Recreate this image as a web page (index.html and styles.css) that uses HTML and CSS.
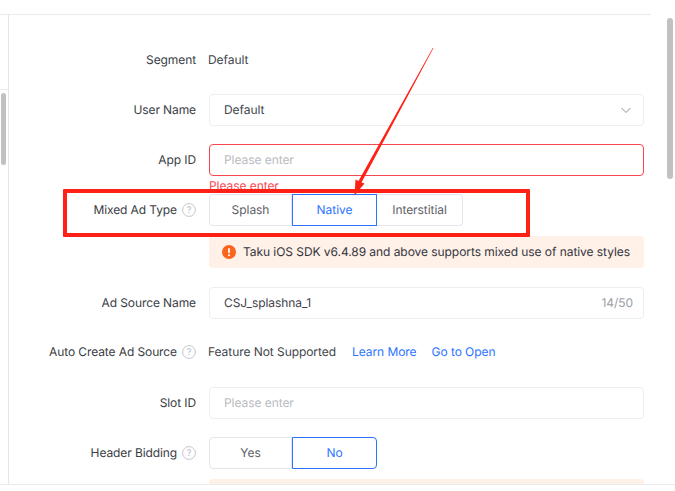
FILE: index.html
```html
<!DOCTYPE html>
<html lang="en">
<head>
<meta charset="utf-8">
<title>Ad Source</title>
<link rel="stylesheet" href="styles.css">
</head>
<body>
<div class="page">
  <div class="topbar"></div>
  <div class="main">
    <aside class="rail"><div class="rail-top"></div><div class="rail-thumb"></div></aside>
    <form class="form">
      <div class="row">
        <div class="label">Segment</div>
        <div class="control"><div class="plain">Default</div></div>
      </div>
      <div class="row">
        <div class="label">User Name</div>
        <div class="control">
          <div class="input select"><span>Default</span>
            <svg class="chev" width="12" height="12" viewBox="0 0 12 12"><path d="M1.500 4 6 8.500 10.500 4" fill="none" stroke="#b9bcc4" stroke-width="1.100"/></svg>
          </div>
        </div>
      </div>
      <div class="row tight">
        <div class="label">App ID</div>
        <div class="control">
          <div class="input invalid"><span class="ph">Please enter</span></div>
          <div class="error">Please enter</div>
        </div>
      </div>
      <div class="row wide">
        <div class="label">Mixed Ad Type<svg class="help" width="14" height="14" viewBox="0 0 14 14"><circle cx="7" cy="7" r="6.400" fill="none" stroke="#c4c6cc"/><text x="7" y="10.200" text-anchor="middle" class="help-q">?</text></svg></div>
        <div class="control">
          <div class="segs">
            <div class="seg first">Splash</div>
            <div class="seg on">Native</div>
            <div class="seg last">Interstitial</div>
          </div>
          <div class="alert">
            <svg class="alert-icon" width="14" height="14" viewBox="0 0 14 14"><circle cx="7" cy="7" r="7" fill="#f9651c"/><rect x="6.100" y="3" width="1.800" height="5.200" rx=".9" fill="#fff"/><circle cx="7" cy="10.200" r="1.050" fill="#fff"/></svg>
            <span>Taku iOS SDK v6.4.89 and above supports mixed use of native styles</span>
          </div>
        </div>
      </div>
      <div class="row close">
        <div class="label">Ad Source Name</div>
        <div class="control"><div class="input select"><span>CSJ_splashna_1</span><span class="count">14/50</span></div></div>
      </div>
      <div class="row wide">
        <div class="label">Auto Create Ad Source<svg class="help" width="14" height="14" viewBox="0 0 14 14"><circle cx="7" cy="7" r="6.400" fill="none" stroke="#c4c6cc"/><text x="7" y="10.200" text-anchor="middle" class="help-q">?</text></svg></div>
        <div class="control"><div class="plain links"><span>Feature Not Supported</span><a>Learn More</a><a>Go to Open</a></div></div>
      </div>
      <div class="row">
        <div class="label">Slot ID</div>
        <div class="control"><div class="input"><span class="ph">Please enter</span></div></div>
      </div>
      <div class="row">
        <div class="label">Header Bidding<svg class="help" width="14" height="14" viewBox="0 0 14 14"><circle cx="7" cy="7" r="6.400" fill="none" stroke="#c4c6cc"/><text x="7" y="10.200" text-anchor="middle" class="help-q">?</text></svg></div>
        <div class="control">
          <div class="segs">
            <div class="seg first">Yes</div>
            <div class="seg on on-end">No</div>
          </div>
          <div class="alert alert-cut"></div>
        </div>
      </div>
    </form>
  </div>
  <div class="page-thumb"></div>
</div>
<div class="mark-box"></div>
<svg class="mark-arrow" width="100" height="160" viewBox="0 0 100 160"><polygon points="88.500,3 87.800,3 13.500,136 10.500,134.500 9.500,150.500 19.500,138.500 16.500,137.500" fill="#ff2116"/></svg>
</body>
</html>
```
FILE: styles.css
```css
* { box-sizing: border-box; }
html, body { margin: 0; height: 100%; background: #fff; overflow: hidden; }
body { font-family: Inter, "Liberation Sans", sans-serif; font-size: 12px; color: #33363d; position: relative; text-rendering: geometricPrecision; letter-spacing: -0.06px; }
.page { height: 485px; display: flex; flex-direction: column; border-bottom: 1px solid #e8eaf0; position: relative; }
.topbar { height: 15px; width: 651px; border-bottom: 1px solid #e8eaf0; flex: none; }
.main { flex: 1; min-height: 0; display: flex; overflow: hidden; }
.rail { width: 9px; flex: none; border-right: 1px solid #e4e6ee; position: relative; }
.rail-top { position: absolute; left: 0; right: 0; top: 74px; border-top: 1px solid #eceef3; }
.rail-thumb { position: absolute; left: 1px; top: 78px; width: 5px; height: 72px; background: #c1c1c1; border-radius: 3px; }
.page-thumb { position: absolute; left: 667px; top: 18px; width: 6px; height: 161px; background: #c1c1c1; border-radius: 3px; }
.form { width: 635px; padding-top: 29px; flex: none; }
.row { display: grid; grid-template-columns: 187px 435px; column-gap: 13px; margin-bottom: 18px; }
.row.tight { margin-bottom: 0; }
.row.wide { margin-bottom: 19px; }
.row.close { margin-bottom: 17px; }
.label { height: 32px; padding-bottom: 2px; display: flex; align-items: center; justify-content: flex-end; color: #3a3d44; white-space: nowrap; letter-spacing: -0.1px; }
.help { margin-left: 5px; flex: none; position: relative; top: 1px; }
.help-q { font-size: 9px; fill: #b5b7be; font-family: Inter, sans-serif; }
.plain { height: 32px; padding-bottom: 2px; display: flex; align-items: center; color: #41444b; margin-left: -1px; }
.links a { color: #2b74ff; margin-left: 15px; }
.links a:first-of-type { margin-left: 16px; }
.input { height: 32px; border: 1px solid #eceef3; border-radius: 4px; padding: 0 10px 2px 14px; display: flex; align-items: center; color: #41444b; }
.select { justify-content: space-between; }
.invalid { border-color: #f9474f; }
.ph { color: #b9bbc1; }
.count { color: #9c9ea5; }
.chev { margin-right: 1px; position: relative; top: 1px; }
.error { height: 18px; line-height: 19px; color: #f9474f; }
.segs { display: flex; height: 32px; }
.seg { width: 84px; padding-bottom: 2px; border: 1px solid #e4e6ee; border-left: 0; display: flex; align-items: center; justify-content: center; color: #5e6168; }
.seg.first { width: 83px; border-left: 1px solid #e4e6ee; border-radius: 4px 0 0 4px; }
.seg.last { width: 86px; border-radius: 0 4px 4px 0; }
.seg.on { width: 85px; border: 1px solid #2b74ff; color: #2b74ff; }
.seg.on-end { border-radius: 0 4px 4px 0; }
.alert { margin-top: 10px; height: 32px; background: #fff0e8; border-radius: 4px; padding: 0 13px 0 13px; display: flex; align-items: center; gap: 7px; color: #33363d; white-space: nowrap; }
.alert span { position: relative; top: -1px; }
.alert-icon { flex: none; }
.alert-cut { height: 40px; }
.mark-box { position: absolute; left: 63px; top: 189px; width: 467px; height: 48px; border: 4.500px solid #ff2116; border-radius: 1px; }
.mark-arrow { position: absolute; left: 345px; top: 45px; }
```
